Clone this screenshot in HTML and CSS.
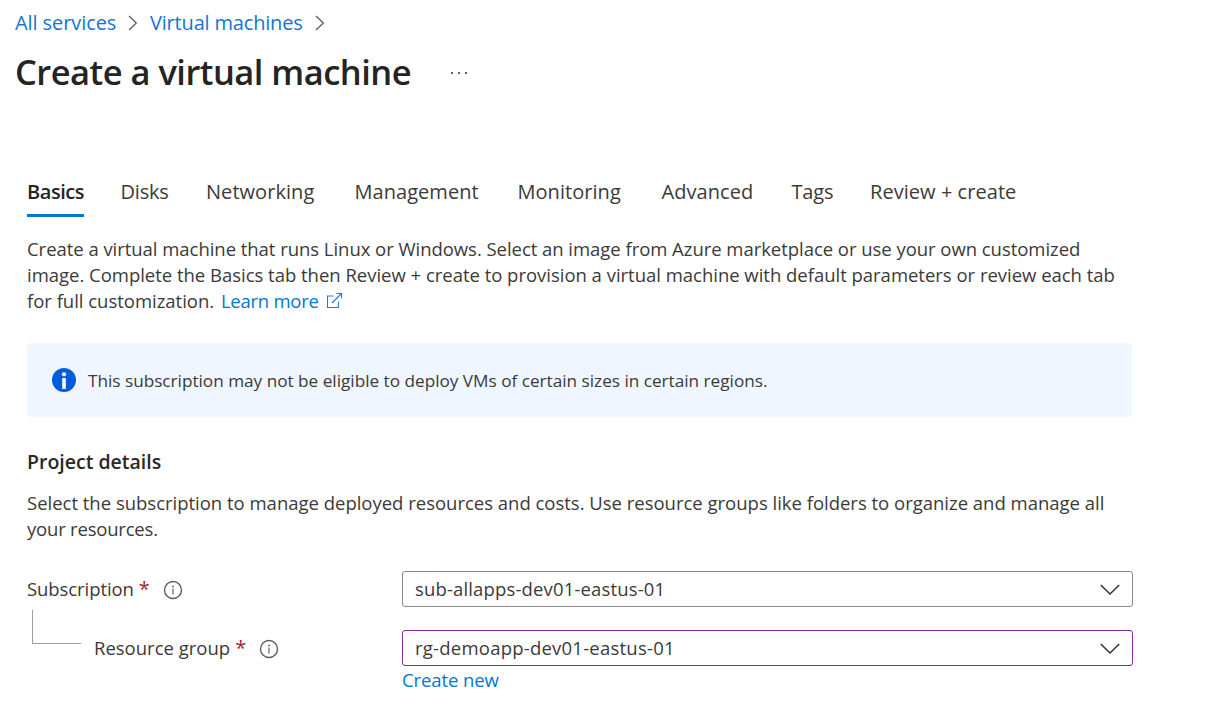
FILE: index.html
```
<!DOCTYPE html>
<html lang="en">
<head>
<meta charset="utf-8">
<title>Create a virtual machine</title>
<link rel="stylesheet" href="styles.css">
</head>
<body>
<header class="header">
  <nav class="breadcrumb">
    <a class="crumb crumb-root">All services</a>
    <svg class="crumb-sep" width="10" height="16" viewBox="0 0 10 16"><path d="M1 1l7.300 7L1 15"/></svg>
    <a class="crumb crumb-vm">Virtual machines</a>
    <svg class="crumb-sep" width="10" height="16" viewBox="0 0 10 16"><path d="M1 1l7.300 7L1 15"/></svg>
  </nav>
  <div class="title-row">
    <h1 class="title">Create a virtual machine</h1>
    <svg class="more" width="18" height="4" viewBox="0 0 18 4"><circle cx="2" cy="2" r="1"/><circle cx="9" cy="2" r="1"/><circle cx="16" cy="2" r="1"/></svg>
  </div>
</header>
<main class="content">
  <div class="tabs">
    <div class="tab tab-active"><span class="tab-label">Basics</span></div>
    <div class="tab tab-tight">Disks</div>
    <div class="tab">Networking</div>
    <div class="tab">Management</div>
    <div class="tab">Monitoring</div>
    <div class="tab">Advanced</div>
    <div class="tab tab-tight">Tags</div>
    <div class="tab">Review + create</div>
  </div>
  <p class="text intro"><span class="intro-first">Create a virtual machine that runs Linux or Windows. Select an image from Azure marketplace or use your own customized</span><br>image. Complete the Basics tab then Review + create to provision a virtual machine with default parameters or review each tab<br>for full customization. <a class="link learn">Learn more</a><svg class="external" width="17" height="17" viewBox="0 0 17 17"><path d="M7.500 4H1.500v11.500h11V9.500M6 11L15 2M10.500 1.500h5V6.500"/></svg></p>
  <div class="banner">
    <svg class="banner-icon" width="24" height="24" viewBox="0 0 24 24"><circle class="disc" cx="12" cy="12" r="12"/><circle class="mark" cx="12" cy="6.300" r="2.100"/><rect class="mark" x="10.200" y="10" width="3.600" height="11"/></svg>
    <span class="banner-text">This subscription may not be eligible to deploy VMs of certain sizes in certain regions.</span>
  </div>
  <h2 class="section-title">Project details</h2>
  <p class="text">Select the subscription to manage deployed resources and costs. Use resource groups like folders to organize and manage all<br><span class="text-end">your resources.</span></p>
  <div class="form">
    <div class="row">
      <div class="label label-main"><span class="name">Subscription</span><span class="required">*</span>
        <svg class="info" width="20" height="20" viewBox="0 0 20 20"><circle class="ring" cx="10" cy="10" r="8.500"/><circle cx="10" cy="6.500" r=".9"/><path class="stem" d="M10 8.500v6"/></svg></div>
      <div class="select"><span>sub-allapps-dev01-eastus-01</span><svg class="chevron" width="20" height="12" viewBox="0 0 20 12"><path d="M.8 1l9.200 9 9.200-9"/></svg></div>
    </div>
    <div class="row">
      <div class="label label-child"><span class="elbow"></span><span class="name">Resource group</span><span class="required">*</span>
        <svg class="info" width="20" height="20" viewBox="0 0 20 20"><circle class="ring" cx="10" cy="10" r="8.500"/><circle cx="10" cy="6.500" r=".9"/><path class="stem" d="M10 8.500v6"/></svg></div>
      <div class="select select-edited"><span>rg-demoapp-dev01-eastus-01</span><svg class="chevron" width="20" height="12" viewBox="0 0 20 12"><path d="M.8 1l9.200 9 9.200-9"/></svg></div>
    </div>
    <a class="link create-new">Create new</a>
  </div>
</main>
</body>
</html>
```
FILE: styles.css
```
* { box-sizing: border-box; }

body {
  margin: 0;
  background: #fff;
  color: #3b3a39;
  font-family: "Open Sans", "Noto Sans", sans-serif;
  font-size: 18.5px;
  line-height: 26px;
  overflow: hidden;
}

h1, h2, p { margin: 0; }
svg { flex: none; fill: none; }

.header { padding: 9px 0 0 15px; }

.breadcrumb {
  display: flex;
  align-items: center;
  height: 28px;
  font-size: 20px;
  line-height: 28px;
  white-space: nowrap;
}

.crumb { color: #1374d6; letter-spacing: -0.08px; }
.crumb-root { width: 113px; }
.crumb-vm { width: 165px; margin-left: 12px; letter-spacing: -0.18px; }
.crumb-sep { stroke: #605e5c; stroke-width: 1.3; }

.title-row { display: flex; align-items: center; gap: 37px; height: 48px; margin-top: 11px; }
.title {
  color: #252423;
  font-size: 34.5px;
  font-weight: 600;
  line-height: 48px;
  letter-spacing: -0.52px;
  width: 398px;
  white-space: nowrap;
}
.more { fill: #323130; margin-top: 2px; }

.content { width: 1133px; padding: 82px 0 0 27px; white-space: nowrap; }

.tabs {
  display: grid;
  grid-template-columns: 93.500px 85.500px 148.500px 163px 144px 130px 78.500px auto;
  height: 39px;
  font-size: 20px;
  line-height: 28px;
  letter-spacing: 0.05px;
}
.tab-active { color: #252423; font-weight: 600; letter-spacing: -0.45px; }
.tab-label { display: block; width: 57px; height: 39px; border-bottom: 3px solid #0078d4; }
.tab-tight { letter-spacing: -0.2px; }

.intro { margin-top: 19px; letter-spacing: -0.018px; }
.intro-first { letter-spacing: -0.04px; }
.link { color: #0078d4; }
.learn { margin-left: 2px; letter-spacing: -0.25px; }
.external { stroke: #2a72e5; stroke-width: 1.1; margin-left: 7px; vertical-align: -1px; }

.banner {
  display: flex;
  align-items: center;
  gap: 12px;
  width: 1105px;
  height: 74px;
  margin-top: 29px;
  padding-left: 25px;
  border-radius: 3px;
  background: #eff6ff;
}
.disc { fill: #015cda; }
.mark { fill: #fff; }
.banner-text { font-size: 17.2px; letter-spacing: -0.01px; padding-top: 1px; }

.section-title {
  margin: 31px 0 14px;
  color: #292827;
  font-size: 19.5px;
  font-weight: 600;
  line-height: 28px;
}
.text { letter-spacing: -0.01px; }
.text.intro { letter-spacing: -0.018px; }
.text-end { letter-spacing: -0.2px; }

.form { margin-top: 29px; }
.row { display: flex; height: 36px; margin-bottom: 23px; }
.row + .row { margin-bottom: 1px; }
.label { display: flex; align-items: center; width: 375px; }
.label-main .name { letter-spacing: -0.08px; }
.label-child { position: relative; padding-left: 67px; }
.elbow {
  position: absolute;
  left: 5px;
  top: -20px;
  width: 49px;
  height: 34px;
  border: solid #a19f9d;
  border-width: 0 0 1px 1px;
}
.required { color: #a4262c; margin-left: 5px; font-size: 20px; }
.info { margin: 1px 0 0 13px; fill: #605e5c; }
.ring { fill: none; stroke: #605e5c; stroke-width: 1.4; }
.stem { stroke: #605e5c; stroke-width: 1.2; }

.select {
  display: flex;
  align-items: center;
  justify-content: space-between;
  width: 731px;
  height: 36px;
  padding: 0 12px;
  border: 1px solid #8a8886;
  border-radius: 3px;
  letter-spacing: 0.15px;
}
.select-edited { border-color: #8726a6; letter-spacing: 0.23px; }
.chevron { stroke: #323130; stroke-width: 1.5; margin-top: 1px; }
.create-new { display: block; margin-left: 375px; letter-spacing: -0.1px; }
```
